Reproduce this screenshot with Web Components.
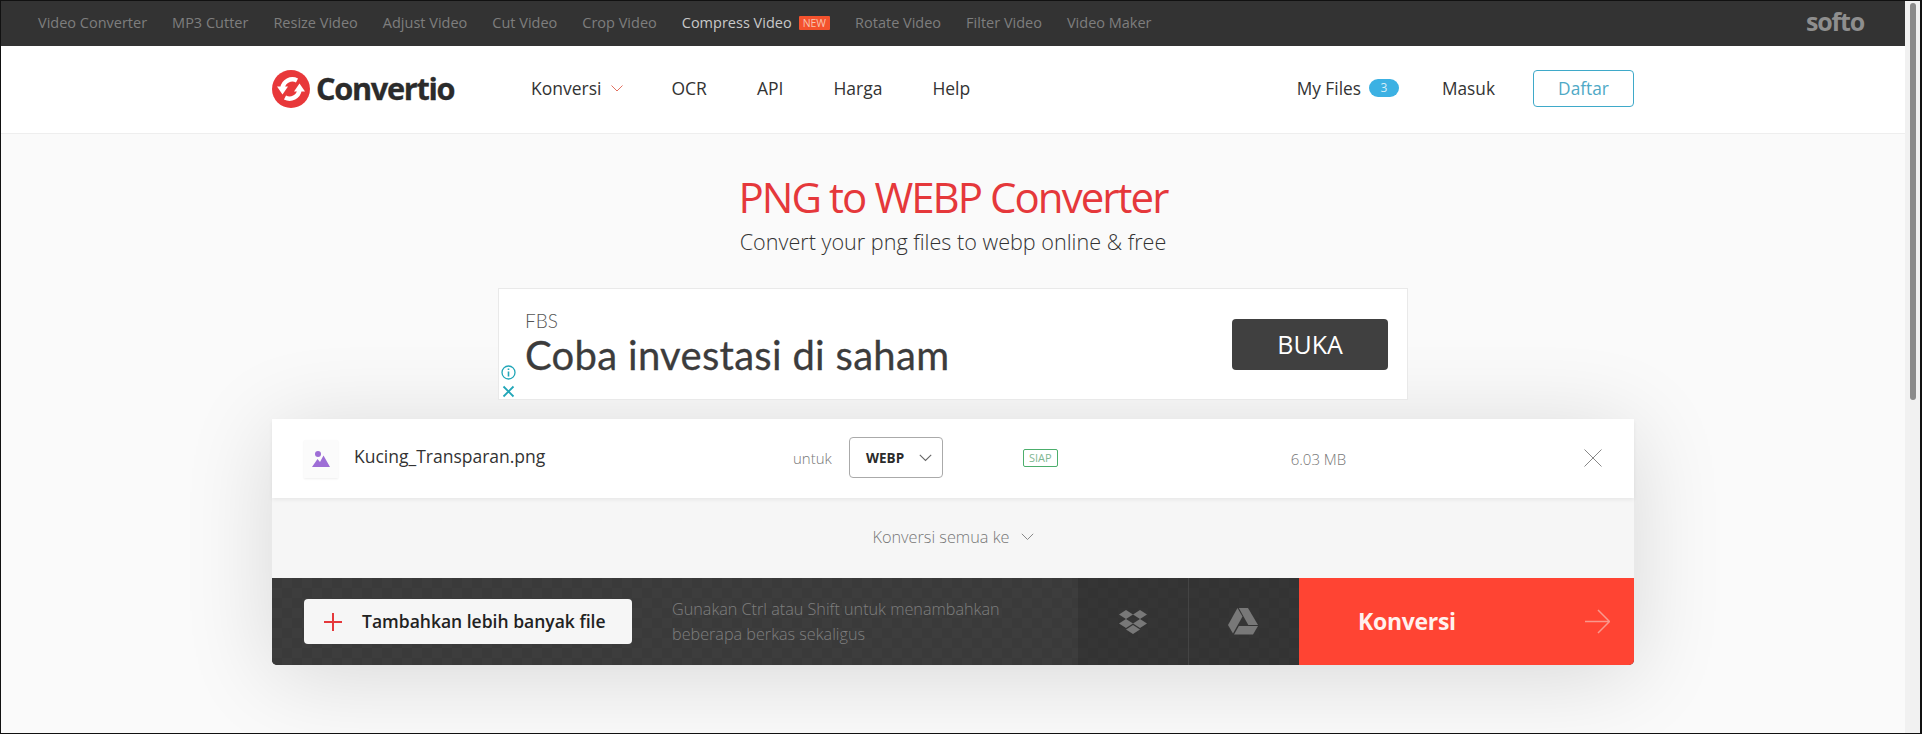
<!DOCTYPE html>
<html>
<head>
<meta charset="utf-8">
<title>PNG to WEBP Converter</title>
<style>
  html, body { margin: 0; height: 734px; overflow: hidden; background: #fafafa; }
  body { font-family: "Open Sans", sans-serif; display: flex; box-sizing: border-box; border: 1px solid #111; border-right-width: 2px; }
  .page { flex: 1; min-width: 0; display: flex; flex-direction: column; }
</style>
</head>
<body>
<div class="page">
  <softo-bar></softo-bar>
  <site-header></site-header>
  <page-title heading="PNG to WEBP Converter" sub="Convert your png files to webp online &amp; free"></page-title>
  <ad-banner></ad-banner>
  <convert-box>
    <file-row name="Kucing_Transparan.png" format="WEBP" status="SIAP" size="6.03 MB"></file-row>
    <all-row></all-row>
    <action-bar></action-bar>
  </convert-box>
</div>
<fake-scrollbar></fake-scrollbar>

<script>
  class SoftoBar extends HTMLElement {
    constructor() {
      super();
      this.attachShadow({ mode: 'open' });
      const links = ['Video Converter', 'MP3 Cutter', 'Resize Video', 'Adjust Video', 'Cut Video', 'Crop Video', 'Compress Video', 'Rotate Video', 'Filter Video', 'Video Maker'];
      this.shadowRoot.innerHTML = `
        <style>
          :host { display: flex; align-items: center; height: 45px; background: #333; padding: 0 41px 0 37px; font-size: 14.500px; color: #7e7e7e; flex: none; }
          span.l { margin-right: 25px; white-space: nowrap; margin-top: -2px; }
          span.on { color: #c9c9c9; display: flex; align-items: center; }
          i { font-style: normal; font-size: 10.500px; line-height: 14px; height: 14px; background: #f4522d; color: #f7c4b0; padding: 0 4px; border-radius: 1px; margin-left: 7px; }
          b { margin-left: auto; font: 700 25px "Open Sans", sans-serif; color: #8e8e8e; letter-spacing: -1.200px; margin-top: -5px; }
        </style>
        ${links.map(t => t === 'Compress Video'
          ? `<span class="l on">${t}<i>NEW</i></span>`
          : `<span class="l">${t}</span>`).join('')}
        <b>softo</b>
      `;
    }
  }
  customElements.define('softo-bar', SoftoBar);

  class SiteHeader extends HTMLElement {
    constructor() {
      super();
      this.attachShadow({ mode: 'open' });
      this.shadowRoot.innerHTML = `
        <style>
          :host { display: flex; justify-content: center; flex: none; box-sizing: border-box; background: #fff; border-bottom: 1px solid #eee; height: 88px; }
          .wrap { width: 1362px; display: flex; align-items: center; font-size: 17.500px; color: #333; }
          .wrap > * { margin-top: -3px; }
          .wrap > .logo { margin-top: -1px; }
          .logo { display: flex; align-items: center; width: 259px; font: 700 30.700px "Open Sans", sans-serif; letter-spacing: -1.300px; color: #2b2b2b; -webkit-text-stroke: .3px #2b2b2b; }
          .logo svg { margin-right: 6px; flex: none; }
          .logo span { margin-top: -2px; }
          nav { display: flex; align-items: center; gap: 50px; }
          .k { display: flex; align-items: center; gap: 10px; margin-right: -2px; }
          .right { margin-left: auto; display: flex; align-items: center; font-size: 17.300px; }
          .count { width: 30px; height: 18px; line-height: 18px; border-radius: 9px; background: #3cb1e3; color: #d5eef9; font-size: 12px; text-align: center; margin: 0 43px 0 8px; }
          .join { width: 99px; height: 35px; line-height: 35px; border: 1px solid #3fa9c9; border-radius: 4px; color: #4fa9c6; text-align: center; margin-left: 38px; }
        </style>
        <div class="wrap">
          <div class="logo">
            <svg width="38" height="38" viewBox="0 0 38 38">
              <circle cx="19" cy="19" r="19" fill="#e8383a"/>
              <path d="M25 10.500A10 10 0 0 0 10.500 18M27.500 20A10 10 0 0 1 13 27.500" fill="none" stroke="#fff" stroke-width="4.500"/>
              <path d="M5 16.500H16L10.500 24.500zM22 21.500H33L27.500 13.500z" fill="#fff"/>
            </svg>
            <span>Convertio</span>
          </div>
          <nav>
            <span class="k">Konversi <svg width="12" height="7" viewBox="0 0 12 7"><path d="M.5.500 6 6 11.500.500" fill="none" stroke="#e2705f"/></svg></span>
            <span>OCR</span><span>API</span><span>Harga</span><span>Help</span>
          </nav>
          <div class="right">
            <span>My Files</span><span class="count">3</span><span>Masuk</span><span class="join">Daftar</span>
          </div>
        </div>
      `;
    }
  }
  customElements.define('site-header', SiteHeader);

  class PageTitle extends HTMLElement {
    constructor() {
      super();
      this.attachShadow({ mode: 'open' });
      this.shadowRoot.innerHTML = `
        <style>
          :host { display: block; flex: none; text-align: center; padding-top: 38px; }
          h1 { margin: 0; font-size: 42px; line-height: 50px; font-weight: 400; color: #e5383b; letter-spacing: -1.950px; }
          p { margin: 5px 0 0; font-size: 21.600px; line-height: 30px; font-weight: 300; color: #333; }
        </style>
        <h1>${this.getAttribute('heading')}</h1>
        <p>${this.getAttribute('sub')}</p>
      `;
    }
  }
  customElements.define('page-title', PageTitle);

  class AdBanner extends HTMLElement {
    constructor() {
      super();
      this.attachShadow({ mode: 'open' });
      this.shadowRoot.innerHTML = `
        <style>
          :host { display: flex; flex: none; box-sizing: border-box; width: 910px; height: 112px; margin: 31px auto 0; background: #fff; border: 1px solid #e9e9e9; padding: 0 19px 0 26px; align-items: center; position: relative; }
          .txt { flex: 1; }
          .brand { font: 300 19px/22px "Lato", sans-serif; color: #555; }
          .head { font: 400 40px/46px "Lato", sans-serif; color: #3c3c3c; letter-spacing: .3px; -webkit-text-stroke: .3px #3c3c3c; }
          .btn { width: 156px; height: 51px; border-radius: 4px; background: #404040; color: #fff; font: 500 25px/51px "Open Sans", sans-serif; text-align: center; }
          .adchoices { position: absolute; left: 1px; bottom: 1px; display: flex; flex-direction: column; gap: 5px; width: 17px; align-items: center; }
        </style>
        <div class="txt">
          <div class="brand">FBS</div>
          <div class="head">Coba investasi di saham</div>
        </div>
        <div class="btn">BUKA</div>
        <div class="adchoices">
          <svg width="15" height="15" viewBox="0 0 15 15"><circle cx="7.500" cy="7.500" r="6.500" fill="none" stroke="#21a6b8" stroke-width="1.300"/><path d="M7.500 6.500v5M7.500 3.500v1.600" stroke="#21a6b8" stroke-width="1.600"/></svg>
          <svg width="13" height="13" viewBox="0 0 13 13"><path d="M1.500 1.500l10 10M11.500 1.500l-10 10" stroke="#21a6b8" stroke-width="1.800"/></svg>
        </div>
      `;
    }
  }
  customElements.define('ad-banner', AdBanner);

  class ConvertBox extends HTMLElement {
    constructor() {
      super();
      this.attachShadow({ mode: 'open' });
      this.shadowRoot.innerHTML = `
        <style>
          :host { display: block; flex: none; width: 1362px; margin: 19px auto 0; background: #f6f6f6; box-shadow: 0 10px 90px rgba(0,0,0,.14); border-radius: 0 0 5px 5px; }
        </style>
        <slot></slot>
      `;
    }
  }
  customElements.define('convert-box', ConvertBox);

  class FileRow extends HTMLElement {
    constructor() {
      super();
      this.attachShadow({ mode: 'open' });
      const attr = n => this.getAttribute(n);
      this.shadowRoot.innerHTML = `
        <style>
          :host { display: flex; align-items: center; box-sizing: border-box; height: 79px; background: #fff; box-shadow: 0 2px 4px rgba(0,0,0,.06); position: relative; padding-left: 32px; color: #333; }
          .thumb { width: 34px; height: 38px; display: flex; align-items: center; justify-content: center; flex: none; background: #fbfbfb; box-shadow: 0 1px 2px rgba(0,0,0,.07); margin-right: 16px; }
          .name { width: 439px; font-size: 17.500px; margin-top: -5px; }
          .to { font-size: 15px; font-weight: 300; color: #777; width: 56px; margin-top: -1px; }
          .select { box-sizing: border-box; width: 94px; height: 41px; border: 1px solid #aaa; border-radius: 4px; display: flex; align-items: center; padding-left: 16px; gap: 15px; font-size: 13.500px; font-weight: 700; color: #2b2b2b; margin-top: -2px; }
          .status { margin-left: 80px; border: 1px solid #4cae6c; border-radius: 2px; font-size: 11px; line-height: 16px; padding: 0 5px; color: #7fb893; margin-top: -1px; }
          .size { margin-left: 233px; font-size: 15px; font-weight: 300; color: #777; }
          .close { position: absolute; right: 32px; top: 30px; display: flex; }
        </style>
        <div class="thumb">
          <svg width="18" height="18" viewBox="0 0 18 18"><circle cx="6" cy="4" r="3" fill="#9e6ed6"/><path d="M0 17 5.500 9 8 12l3.500-6.500L18 17z" fill="#9e6ed6"/></svg>
        </div>
        <div class="name">${attr('name')}</div>
        <div class="to">untuk</div>
        <div class="select">${attr('format')}<svg width="13" height="8" viewBox="0 0 13 8"><path d="M.8.800 6.500 6.500 12.200.800" fill="none" stroke="#666" stroke-width="1.100"/></svg></div>
        <div class="status">${attr('status')}</div>
        <div class="size">${attr('size')}</div>
        <svg class="close" width="18" height="18" viewBox="0 0 18 18"><path d="M.5.500l17 17M17.500.500l-17 17" stroke="#888" stroke-width="1"/></svg>
      `;
    }
  }
  customElements.define('file-row', FileRow);

  class AllRow extends HTMLElement {
    constructor() {
      super();
      this.attachShadow({ mode: 'open' });
      this.shadowRoot.innerHTML = `
        <style>
          :host { display: flex; align-items: center; justify-content: center; gap: 11px; box-sizing: border-box; height: 80px; padding-bottom: 2px; font-size: 16.300px; font-weight: 300; color: #777; }
        </style>
        Konversi semua ke
        <svg width="13" height="8" viewBox="0 0 13 8"><path d="M.8.800 6.500 6.500 12.200.800" fill="none" stroke="#888" stroke-width="1"/></svg>
      `;
    }
  }
  customElements.define('all-row', AllRow);

  class ActionBar extends HTMLElement {
    constructor() {
      super();
      this.attachShadow({ mode: 'open' });
      this.shadowRoot.innerHTML = `
        <style>
          :host { display: flex; height: 87px; border-radius: 0 0 5px 5px; overflow: hidden; background: #353535; }
          .checks { background-color: #3a3a3a; background-image: conic-gradient(#3d3d3d 25%, transparent 0 50%, #3d3d3d 0 75%, transparent 0); background-size: 20px 20px; }
          .left { flex: none; box-sizing: border-box; width: 806px; display: flex; align-items: center; padding-left: 32px; }
          .add { box-sizing: border-box; width: 328px; height: 45px; border-radius: 4px; background: #f6f6f6; display: flex; align-items: center; padding: 0 0 2px 20px; gap: 20px; font-size: 17.500px; font-weight: 600; color: #222; flex: none; }
          .add svg { margin-top: 2px; }
          .hint { margin-left: 40px; font-size: 16.200px; font-weight: 300; line-height: 25px; color: #7f7f7f; white-space: nowrap; }
          .cloud { flex: none; display: flex; align-items: center; justify-content: center; width: 110px; background-color: #333; background-image: conic-gradient(#353535 25%, transparent 0 50%, #353535 0 75%, transparent 0); background-size: 20px 20px; }
          .cloud + .cloud { border-left: 1px solid #444; width: 111px; box-sizing: border-box; padding-right: 2px; }
          .go { flex: 1; background: #ff4433; display: flex; align-items: center; padding: 0 24px 2px 59px; color: #fff1ee; font-size: 23px; font-weight: 700; letter-spacing: -.3px; }
          .go svg { margin-left: auto; margin-top: 2px; }
        </style>
        <div class="left checks">
          <div class="add">
            <svg width="18" height="18" viewBox="0 0 18 18"><path d="M9 0v18M0 9h18" stroke="#e5383b" stroke-width="2"/></svg>
            Tambahkan lebih banyak file
          </div>
          <div class="hint">Gunakan Ctrl atau Shift untuk menambahkan<br>beberapa berkas sekaligus</div>
        </div>
        <div class="cloud">
          <svg width="28" height="24" viewBox="0 0 28 24" fill="#787878">
            <path d="M7 0 14 4.500 7 9 0 4.500zM21 0l7 4.500L21 9l-7-4.500zM0 13.500 7 9l7 4.500L7 18zM21 9l7 4.500L21 18l-7-4.500zM7 19.500l7-4.500 7 4.500L14 24z"/>
          </svg>
        </div>
        <div class="cloud">
          <svg width="30" height="27" viewBox="0 0 30 27" fill="#787878">
            <path d="M9.500 0 14.500 8.500 5 25.500 0 17z"/>
            <path d="M10.800 0H20L30 17H20.300z"/>
            <path d="M6 26.500 10.800 18H30L25 26.500z"/>
          </svg>
        </div>
        <div class="go">
          Konversi
          <svg width="25" height="25" viewBox="0 0 25 25"><path d="M0 12.500h24M13 1l11.500 11.500L13 24" fill="none" stroke="#f9998d" stroke-width="1.500"/></svg>
        </div>
      `;
    }
  }
  customElements.define('action-bar', ActionBar);

  class FakeScrollbar extends HTMLElement {
    constructor() {
      super();
      this.attachShadow({ mode: 'open' });
      this.shadowRoot.innerHTML = `
        <style>
          :host { display: block; flex: none; width: 15px; background: #f1f1f1; box-sizing: border-box; padding: 2px 4px 0 5px; }
          div { height: 397px; border-radius: 3px; background: #8b8b8b; }
        </style>
        <div></div>
      `;
    }
  }
  customElements.define('fake-scrollbar', FakeScrollbar);
</script>
</body>
</html>
